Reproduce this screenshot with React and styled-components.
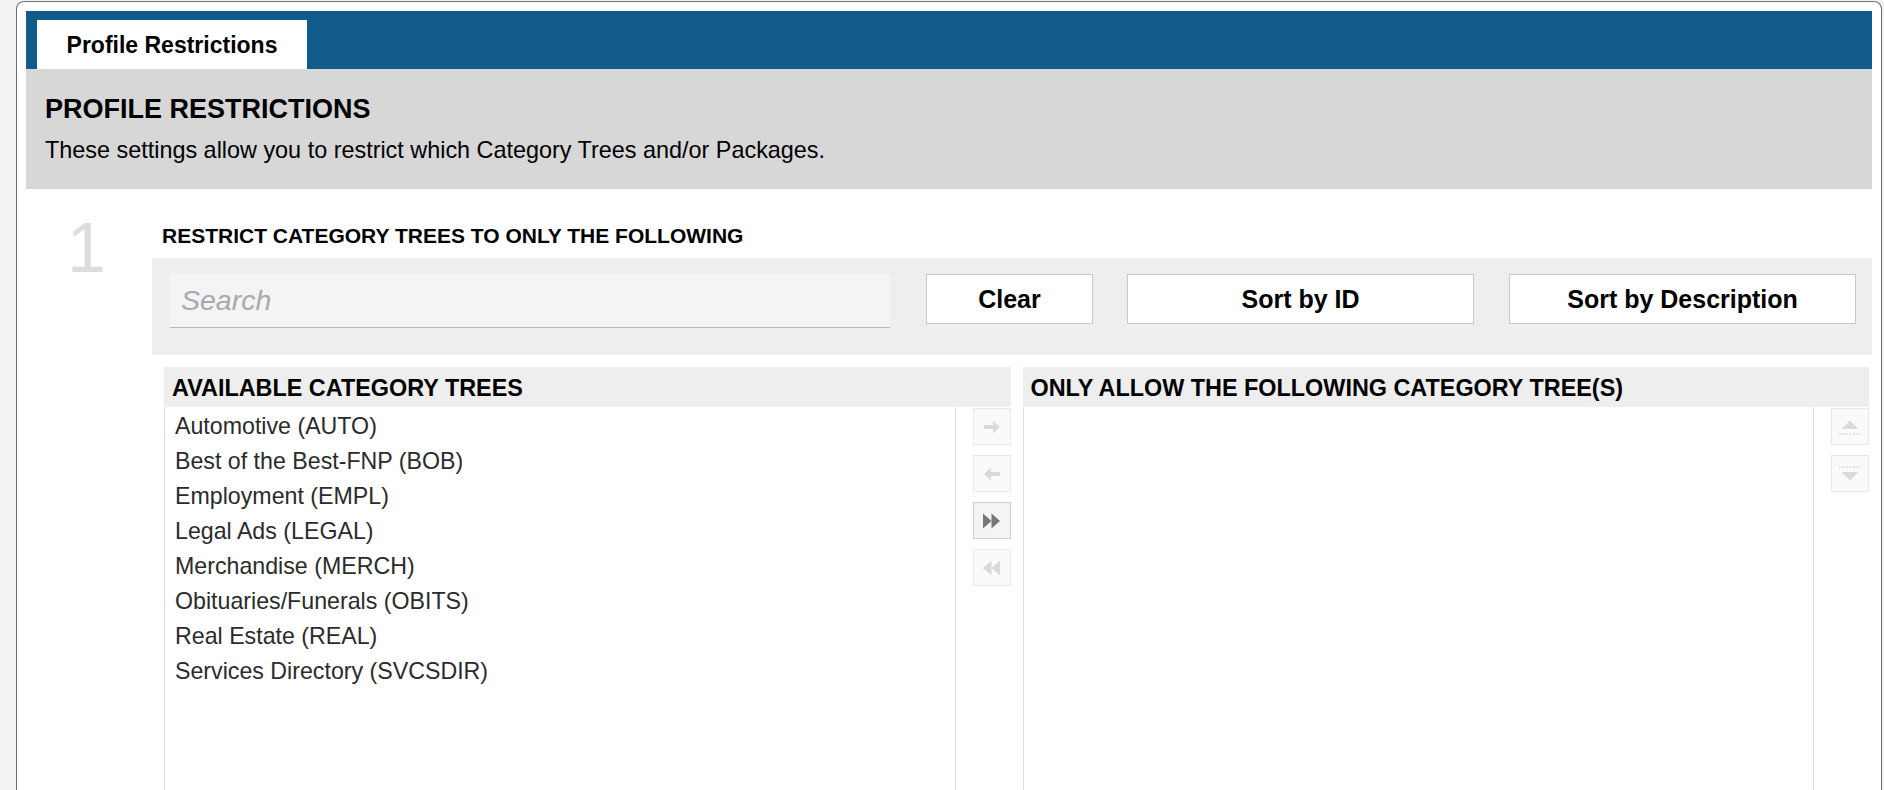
import React from "react";
import styled, { createGlobalStyle } from "styled-components";

const Global = createGlobalStyle`
  html, body { margin: 0; padding: 0; }
  body {
    background: #f3f3f3;
    font-family: "Liberation Sans", Arial, Helvetica, sans-serif;
    color: #000;
    overflow: hidden;
  }
`;

const Page = styled.div`
  padding: 1px 2px 0 16px;
  height: 790px;
  box-sizing: border-box;
`;

const Frame = styled.div`
  background: #fff;
  border: 1px solid #707070;
  border-bottom: none;
  border-radius: 8px 8px 0 0;
  padding: 9px 9px 0 9px;
  height: 100%;
  box-sizing: border-box;
`;

const TabBar = styled.div`
  background: #105b8a;
  height: 58px;
  padding: 9px 0 0 11px;
  box-sizing: border-box;
  display: flex;
  align-items: flex-end;
`;

const Tab = styled.div`
  background: #fff;
  width: 270px;
  height: 49px;
  display: flex;
  align-items: center;
  justify-content: center;
  font-weight: bold;
  font-size: 23px;
  padding-top: 2px;
  box-sizing: border-box;
`;

const Header = styled.div`
  background: #d7d7d7;
  height: 120px;
  padding: 24px 19px 0;
  box-sizing: border-box;
`;

const Title = styled.h1`
  margin: 0;
  font-size: 27px;
  font-weight: bold;
  line-height: 32px;
`;

const Description = styled.p`
  margin: 11px 0 0;
  font-size: 23.4px;
  line-height: 28px;
`;

const Section = styled.div`
  display: flex;
  padding-top: 26px;
`;

const StepNumber = styled.div`
  width: 126px;
  padding-left: 41px;
  box-sizing: border-box;
  font-size: 70px;
  line-height: 70px;
  color: #dddddd;
  font-weight: normal;
  margin-top: -2px;
`;

const Body = styled.div`
  flex: 1;
  min-width: 0;
`;

const SectionTitle = styled.h2`
  margin: 0 0 0 10px;
  font-size: 21px;
  font-weight: bold;
  line-height: 24px;
  height: 43px;
  padding-top: 9px;
  box-sizing: border-box;
`;

const Toolbar = styled.div`
  background: #eeeeee;
  height: 97px;
  padding: 16px 16px 0 18px;
  box-sizing: border-box;
  display: flex;
  align-items: flex-start;
`;

const SearchInput = styled.input`
  width: 720px;
  height: 54px;
  background: #f3f4f6;
  border: none;
  border-bottom: 1px solid #b9b9b9;
  padding: 0 11px;
  box-sizing: border-box;
  font-family: inherit;
  font-size: 28.5px;
  font-style: italic;
  color: #333;
  outline: none;
  &::placeholder { color: #a9a9a9; }
`;

const ToolButton = styled.button`
  width: ${(p) => p.$w}px;
  height: 50px;
  margin-left: ${(p) => p.$gap}px;
  background: #fff;
  border: 1px solid #c8c8c8;
  font-family: inherit;
  font-weight: bold;
  font-size: 25px;
  color: #000;
  padding: 0;
`;

const Lists = styled.div`
  display: flex;
  gap: 12px;
  margin: 12px 3px 0 12px;
`;

const Panel = styled.div`
  flex: 1;
  display: flex;
  flex-direction: column;
`;

const PanelHeader = styled.div`
  background: #eeeeee;
  height: 40px;
  padding: 3px 8px 0;
  display: flex;
  align-items: center;
  font-weight: bold;
  font-size: 23.4px;
  box-sizing: border-box;
  white-space: nowrap;
`;

const PanelRow = styled.div`
  display: flex;
  gap: 17px;
  height: 400px;
`;

const ListBox = styled.div`
  flex: 1;
  border: 1px solid #dedede;
  border-top: none;
  padding: 2px 10px 0;
`;

const Item = styled.div`
  font-size: 23.2px;
  line-height: 35px;
  height: 35px;
  color: #2b2b2b;
  white-space: nowrap;
`;

const ButtonColumn = styled.div`
  width: 38px;
  display: flex;
  flex-direction: column;
  gap: 10px;
  padding-top: 1px;
`;

const MoveButton = styled.div`
  width: 38px;
  height: 37px;
  box-sizing: border-box;
  border: 1px solid ${(p) => (p.$active ? "#cfcfcf" : "#e9e9e9")};
  background: ${(p) => (p.$active ? "#f4f4f4" : "#fafafa")};
  color: ${(p) => (p.$active ? "#777777" : "#dadada")};
  display: flex;
  align-items: center;
  justify-content: center;
`;

const ArrowRight = () => (
  <svg width="18" height="16" viewBox="0 0 18 16">
    <path d="M1 6h9V1.5L17 8l-7 6.5V10H1z" fill="currentColor" />
  </svg>
);
const ArrowLeft = () => (
  <svg width="18" height="16" viewBox="0 0 18 16">
    <path d="M17 6H8V1.5L1 8l7 6.5V10h9z" fill="currentColor" />
  </svg>
);
const DoubleRight = () => (
  <svg width="19" height="18" viewBox="0 0 19 18">
    <path d="M1 1.5l8.5 7.5L1 16.5zM9.5 1.5L18 9l-8.5 7.5z" fill="currentColor" />
  </svg>
);
const DoubleLeft = () => (
  <svg width="19" height="18" viewBox="0 0 19 18">
    <path d="M18 1.5L9.5 9l8.5 7.5zM9.5 1.5L1 9l8.5 7.5z" fill="currentColor" />
  </svg>
);
const MoveUp = () => (
  <svg width="26" height="24" viewBox="0 0 26 24">
    <path d="M4.5 14L13 5.5l8.5 8.5z" fill="currentColor" />
    <path d="M2 19h22" stroke="currentColor" strokeWidth="1.5" strokeDasharray="2 1.5" />
  </svg>
);
const MoveDown = () => (
  <svg width="26" height="24" viewBox="0 0 26 24">
    <path d="M2 5h22" stroke="currentColor" strokeWidth="1.5" strokeDasharray="2 1.5" />
    <path d="M4.5 10l8.5 8.5 8.5-8.5z" fill="currentColor" />
  </svg>
);

const items = [
  "Automotive (AUTO)",
  "Best of the Best-FNP (BOB)",
  "Employment (EMPL)",
  "Legal Ads (LEGAL)",
  "Merchandise (MERCH)",
  "Obituaries/Funerals (OBITS)",
  "Real Estate (REAL)",
  "Services Directory (SVCSDIR)",
];

export default function App() {
  return (
    <>
      <Global />
      <Page>
        <Frame>
          <TabBar>
            <Tab>Profile Restrictions</Tab>
          </TabBar>
          <Header>
            <Title>PROFILE RESTRICTIONS</Title>
            <Description>
              These settings allow you to restrict which Category Trees and/or Packages.
            </Description>
          </Header>
          <Section>
            <StepNumber>1</StepNumber>
            <Body>
              <SectionTitle>RESTRICT CATEGORY TREES TO ONLY THE FOLLOWING</SectionTitle>
              <Toolbar>
                <SearchInput placeholder="Search" />
                <ToolButton $w={167} $gap={36}>Clear</ToolButton>
                <ToolButton $w={347} $gap={34}>Sort by ID</ToolButton>
                <ToolButton $w={347} $gap={35}>Sort by Description</ToolButton>
              </Toolbar>
              <Lists>
                <Panel>
                  <PanelHeader>AVAILABLE CATEGORY TREES</PanelHeader>
                  <PanelRow>
                    <ListBox>
                      {items.map((it) => (
                        <Item key={it}>{it}</Item>
                      ))}
                    </ListBox>
                    <ButtonColumn>
                      <MoveButton><ArrowRight /></MoveButton>
                      <MoveButton><ArrowLeft /></MoveButton>
                      <MoveButton $active><DoubleRight /></MoveButton>
                      <MoveButton><DoubleLeft /></MoveButton>
                    </ButtonColumn>
                  </PanelRow>
                </Panel>
                <Panel>
                  <PanelHeader>ONLY ALLOW THE FOLLOWING CATEGORY TREE(S)</PanelHeader>
                  <PanelRow>
                    <ListBox />
                    <ButtonColumn>
                      <MoveButton><MoveUp /></MoveButton>
                      <MoveButton><MoveDown /></MoveButton>
                    </ButtonColumn>
                  </PanelRow>
                </Panel>
              </Lists>
            </Body>
          </Section>
        </Frame>
      </Page>
    </>
  );
}
